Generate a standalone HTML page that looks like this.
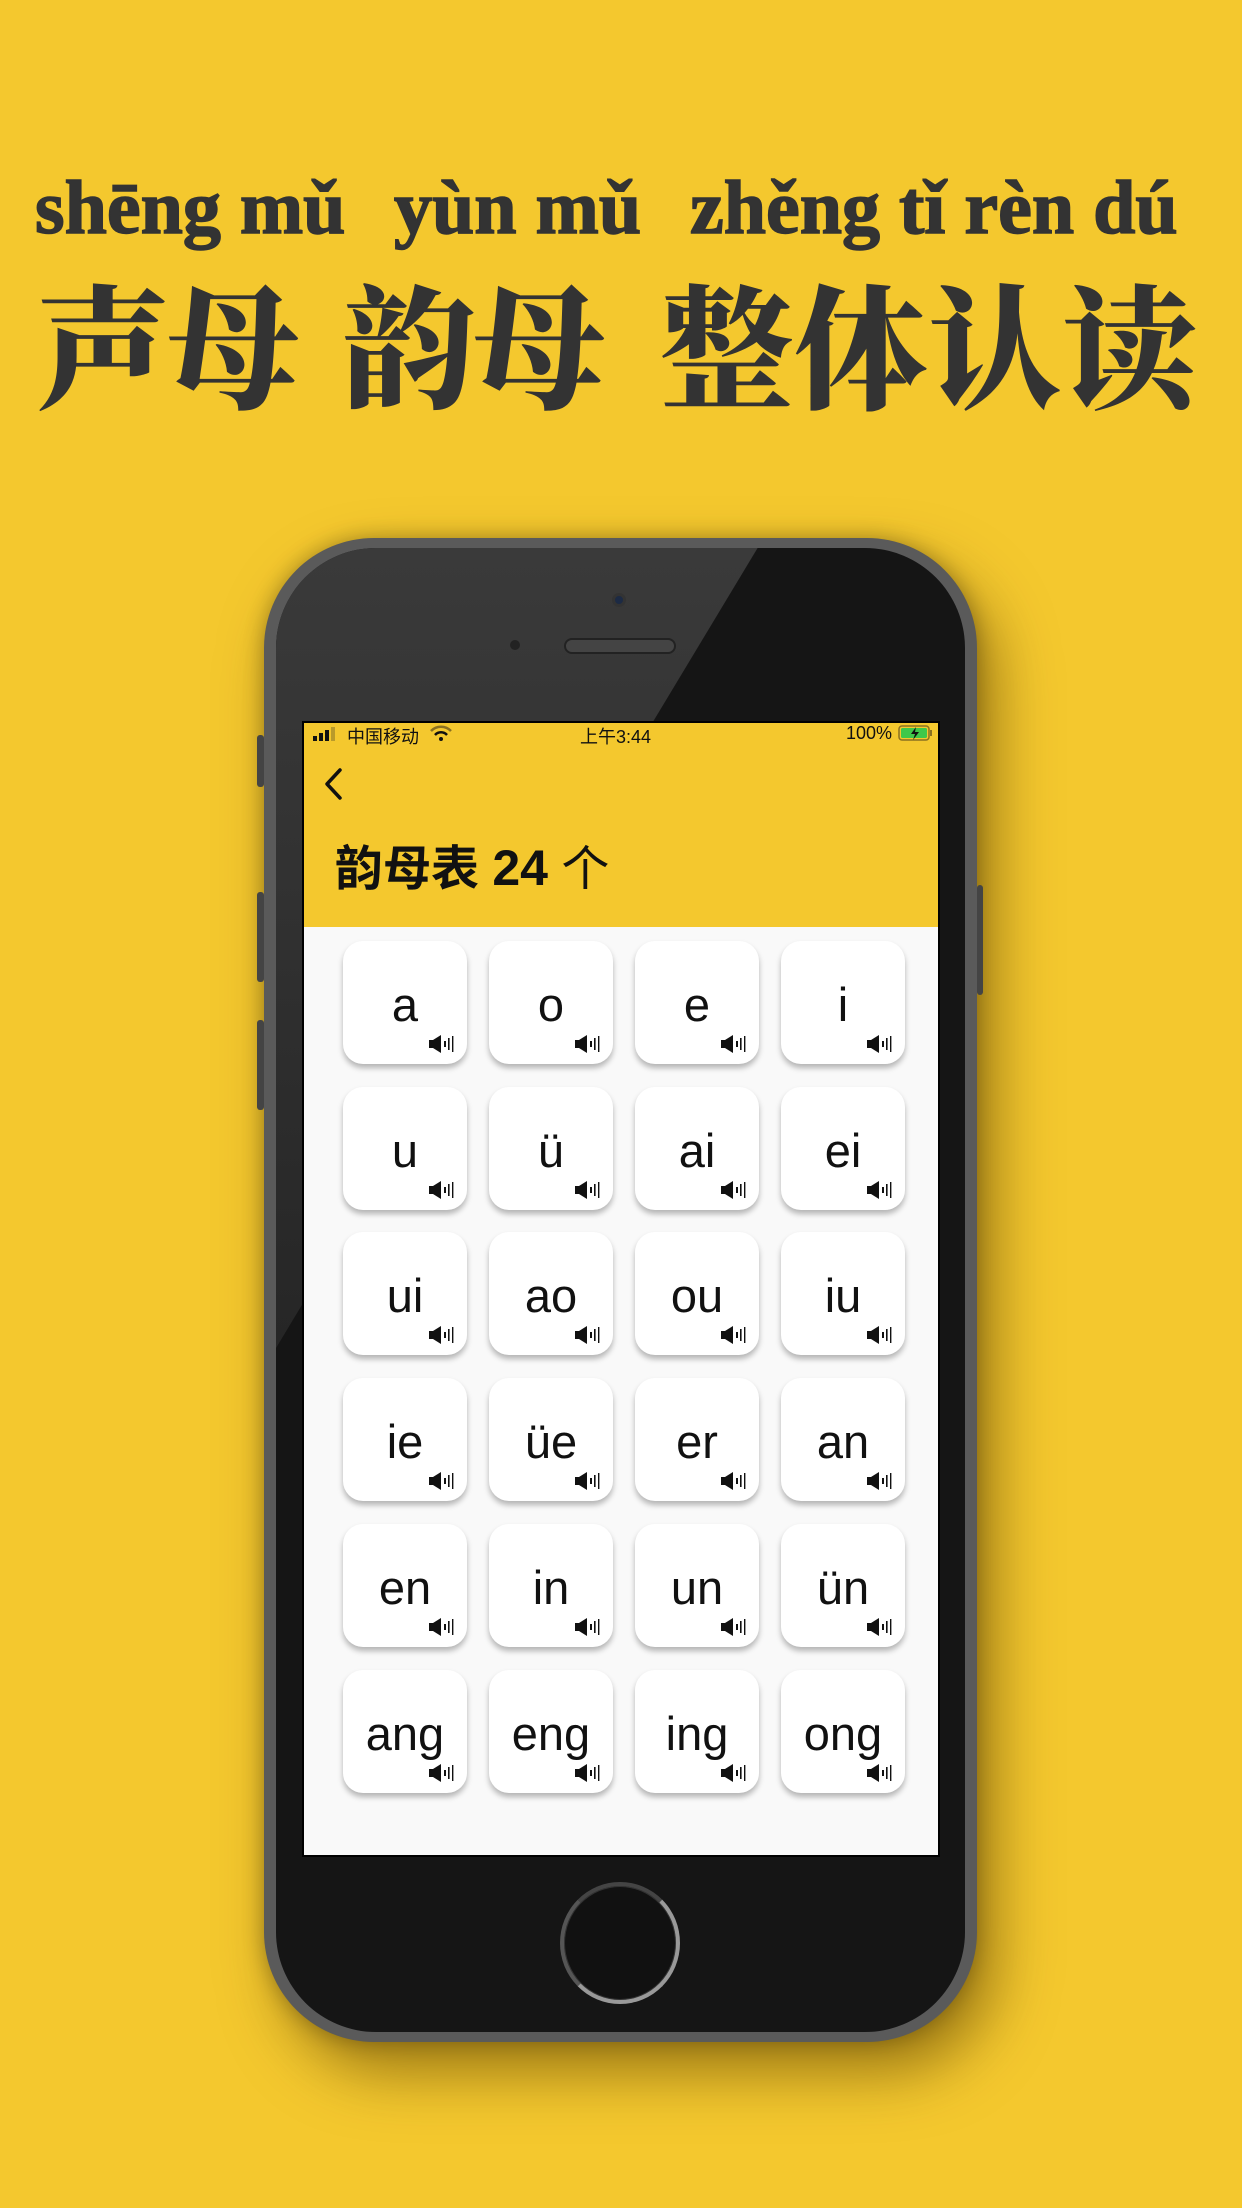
<!DOCTYPE html>
<html><head><meta charset="utf-8"><style>
*{margin:0;padding:0;box-sizing:border-box}
body{width:1242px;height:2208px;background:#F4C82E;position:relative;overflow:hidden;font-family:"Liberation Sans","Noto Sans CJK SC",sans-serif}
.py{position:absolute;top:170px;font-family:"Liberation Serif",serif;font-weight:bold;font-size:76px;color:#333;white-space:nowrap;line-height:1;-webkit-text-stroke:1.5px #333}
.cn{position:absolute;top:274px;font-family:"Noto Serif CJK SC","Liberation Serif",serif;font-weight:900;font-size:134px;color:#333;line-height:1;white-space:nowrap}
.phone{position:absolute;left:264px;top:538px;width:713px;height:1504px;border-radius:110px;background:#5a5a5a;box-shadow:18px 30px 60px rgba(80,55,0,.55),0 0 20px rgba(0,0,0,.3)}
.inner{position:absolute;left:12px;top:10px;right:12px;bottom:10px;border-radius:100px;background:#151515}
.glare{position:absolute;left:12px;top:10px;width:560px;height:800px;border-radius:100px 0 0 0;background:linear-gradient(180deg,#3a3a3a,#262626);clip-path:polygon(0 0,86% 0,0 100%)}
.screen{position:absolute;left:302px;top:721px;width:638px;height:1136px;background:#F9F9F9;overflow:hidden;border:2px solid #000}
.hdr{position:absolute;left:0;top:0;width:100%;height:204px;background:#F4C82E}
.card{position:absolute;width:124px;height:123px;background:#fff;border-radius:20px;box-shadow:0 4px 6px rgba(0,0,0,.28)}
.card span{position:absolute;left:0;right:0;top:40px;text-align:center;font-size:47px;color:#111;line-height:1}
.card svg{position:absolute;left:86px;top:94px}
.sb{position:absolute;font-size:18px;color:#111;top:0px}
</style></head><body>
<div class="py" style="left:35px">shēng mǔ</div>
<div class="py" style="left:394px">yùn mǔ</div>
<div class="py" style="left:690px">zhěng tǐ rèn dú</div>
<div class="cn" style="left:36px;letter-spacing:-4px">声母</div>
<div class="cn" style="left:342px;letter-spacing:-4px">韵母</div>
<div class="cn" style="left:660px">整体认读</div>

<div class="phone"><div class="inner"></div><div class="glare"></div>
<div style="position:absolute;left:348px;top:55px;width:14px;height:14px;border-radius:50%;background:#1c2a44;border:3px solid #333"></div>
<div style="position:absolute;left:300px;top:100px;width:112px;height:16px;border-radius:8px;background:#444;border:2px solid #222"></div>
<div style="position:absolute;left:246px;top:102px;width:10px;height:10px;border-radius:50%;background:#222"></div>
<div style="position:absolute;left:296px;top:1344px;width:120px;height:122px;border-radius:50%;background:#111;border:4px solid #999;border-top-color:#444;border-left-color:#555;box-shadow:inset 0 0 0 1px #333"></div>
</div>
<div style="position:absolute;left:257px;top:735px;width:7px;height:52px;background:#444;border-radius:3px"></div>
<div style="position:absolute;left:257px;top:892px;width:7px;height:90px;background:#444;border-radius:3px"></div>
<div style="position:absolute;left:257px;top:1020px;width:7px;height:90px;background:#444;border-radius:3px"></div>
<div style="position:absolute;left:977px;top:885px;width:6px;height:110px;background:#444;border-radius:3px"></div>

<div class="screen">
<div class="hdr"></div>
<svg style="position:absolute;left:9px;top:4px" width="30" height="14"><rect x="0" y="9" width="4" height="5" fill="#111"/><rect x="6" y="6" width="4" height="8" fill="#111"/><rect x="12" y="3" width="4" height="11" fill="#111"/><rect x="18" y="0" width="4" height="14" fill="#b99a2a"/></svg>
<div class="sb" style="left:43px">中国移动</div>
<svg style="position:absolute;left:126px;top:2px" width="22" height="16" viewBox="0 0 22 16"><path d="M1 6a14 14 0 0 1 20 0" stroke="#8a7020" stroke-width="2.5" fill="none"/><path d="M5 10a8 8 0 0 1 12 0" stroke="#111" stroke-width="2.5" fill="none"/><circle cx="11" cy="14" r="2" fill="#111"/></svg>
<div class="sb" style="left:276px">上午3:44</div>
<div class="sb" style="left:542px">100%</div>
<svg style="position:absolute;left:594px;top:2px" width="36" height="16"><rect x="1" y="1" width="30" height="14" rx="3" fill="none" stroke="#8a7020" stroke-width="1.5"/><rect x="3" y="3" width="26" height="10" rx="1.5" fill="#3fc84a"/><rect x="32" y="5" width="2" height="6" fill="#8a7020"/><path d="M18 2l-5 7h4l-2 6 6-8h-4z" fill="#111"/></svg>
<svg style="position:absolute;left:18px;top:44px" width="24" height="34"><path d="M18 3L5 17l13 14" stroke="#111" stroke-width="3.5" fill="none" stroke-linecap="round" stroke-linejoin="round"/></svg>
<div style="position:absolute;left:31px;top:120px;font-size:48px;font-weight:bold;color:#111;line-height:1;white-space:nowrap">韵母表 <span style="font-size:50px">24</span> <span style="font-weight:normal">个</span></div>
</div>
<div id="cards"></div>
<script>
var L=["a","o","e","i","u","ü","ai","ei","ui","ao","ou","iu","ie","üe","er","an","en","in","un","ün","ang","eng","ing","ong"];
var ico='<svg width="26" height="18" viewBox="0 0 26 18"><rect x="0" y="5" width="5" height="8" fill="#111"/><path d="M4 5L12 0V18L4 13Z" fill="#111"/><rect x="15" y="6" width="2" height="6" fill="#111"/><rect x="19" y="3" width="1.6" height="12" fill="#111"/><rect x="23" y="1" width="1.4" height="16" fill="#111"/></svg>';
var h="";for(var i=0;i<24;i++){var r=Math.floor(i/4),c=i%4;h+='<div class="card" style="left:'+(343+c*146)+'px;top:'+(941+r*145.7)+'px"><span>'+L[i]+'</span>'+ico+'</div>';}
document.getElementById("cards").innerHTML=h;
</script>
</body></html>
